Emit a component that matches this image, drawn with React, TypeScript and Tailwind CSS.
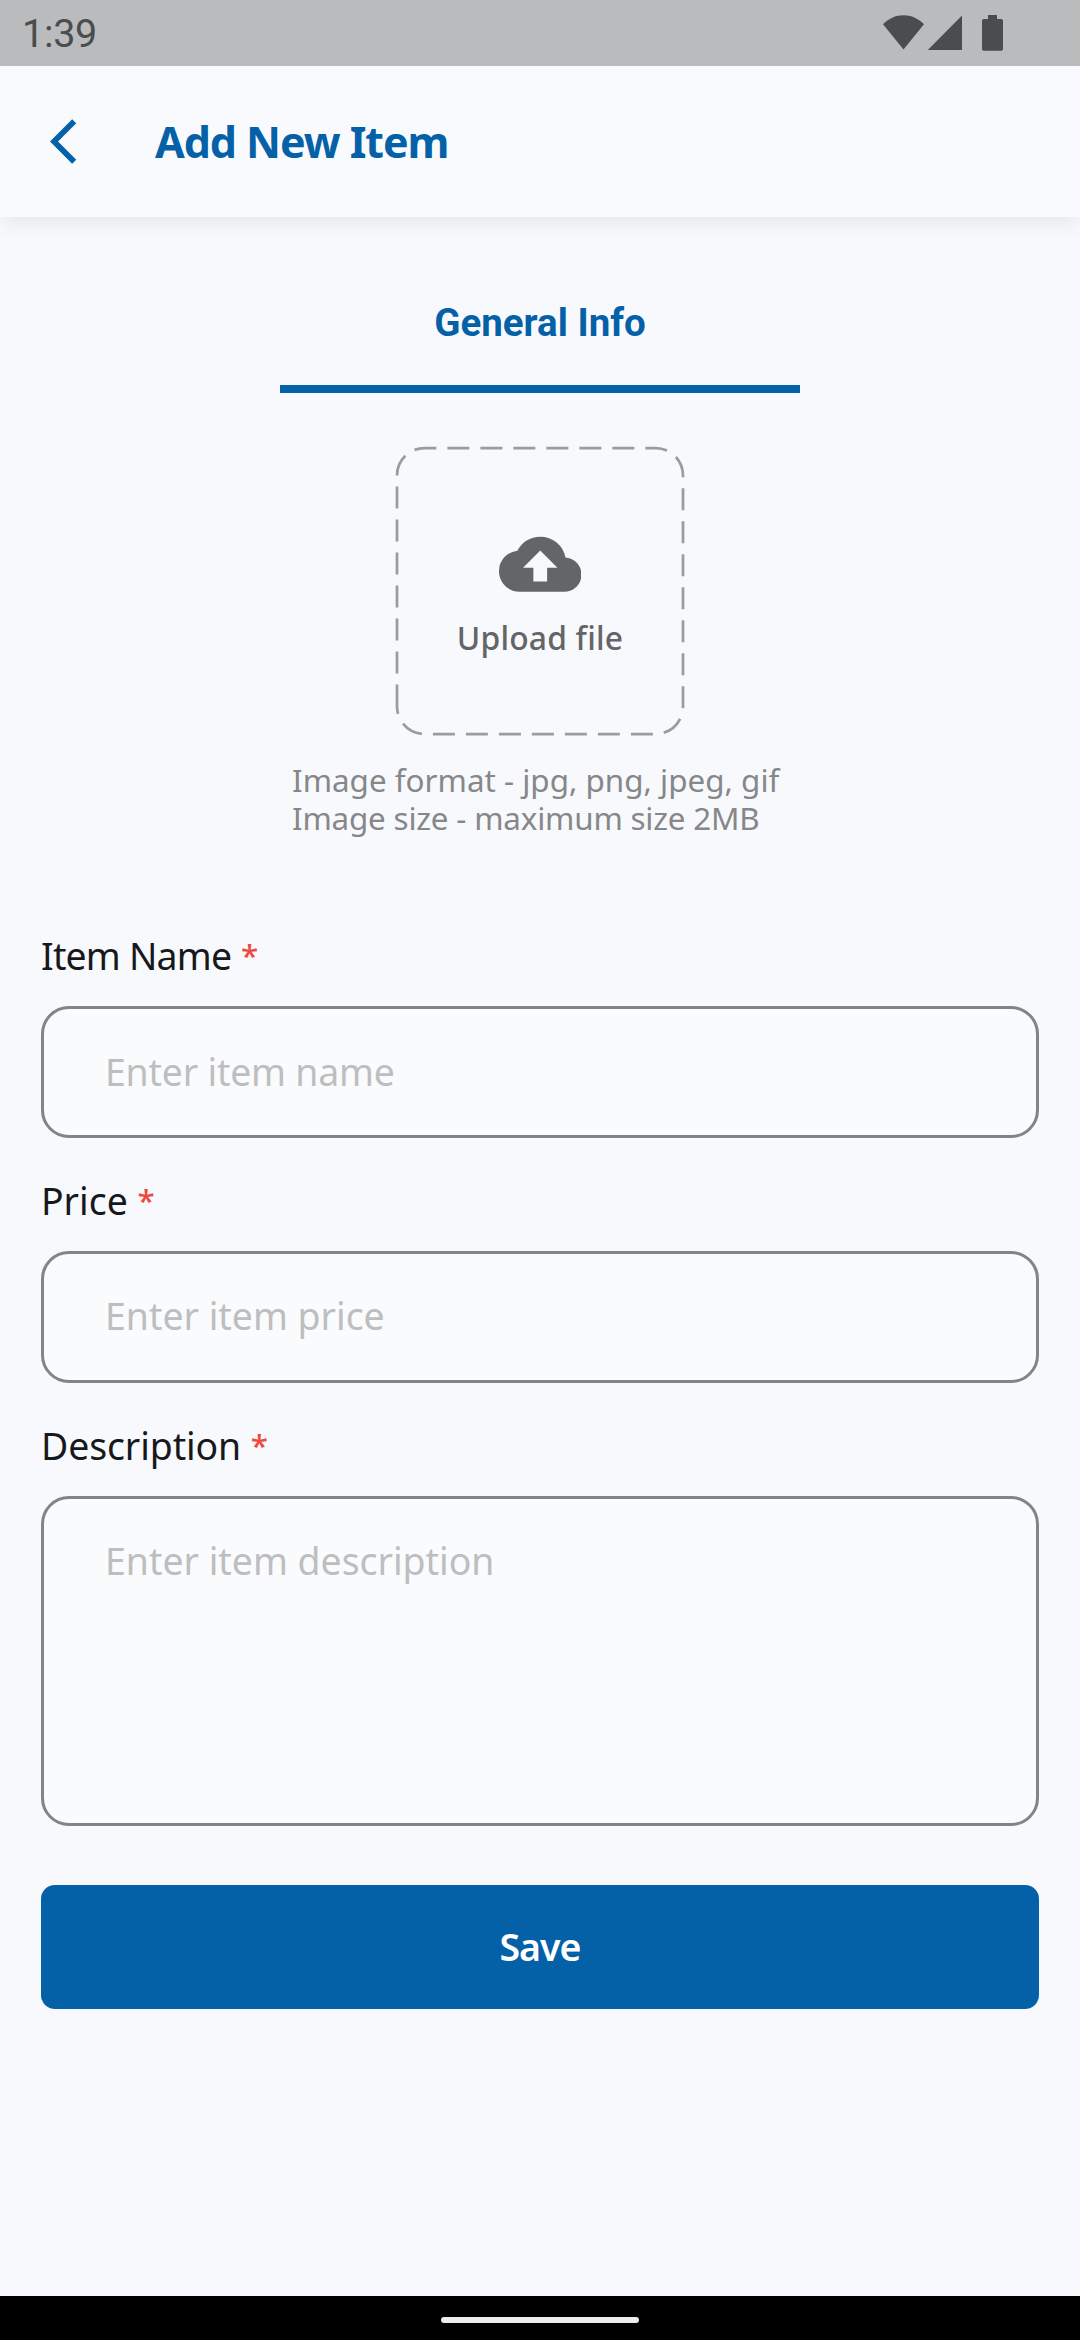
import type { ReactNode } from 'react';
import { MdCloudUpload } from 'react-icons/md';

function StatusBar() {
  return (
    <div className="flex h-[66px] shrink-0 items-center justify-between bg-[#babbbd] pl-[22px] text-[#4b4c4e]">
      <span className="mt-[2px] font-['Roboto',sans-serif] text-[39.5px] leading-[46px] tracking-[-0.3px]">1:39</span>
      <svg className="mr-[76px] h-[38px] w-[122px]" viewBox="882 14 122 38" fill="currentColor">
        <path d="M883 24.3C888.5 18.5 895.5 15.2 903.5 15.2S918.5 18.5 924 24.3L903.5 49.5z" />
        <path d="M962 15.5V50H927.8z" />
        <path d="M988 15h9v4h4.3q1.7 0 1.7 1.7v28.2q0 1.8-1.7 1.8h-17.6q-1.7 0-1.7-1.8V20.7q0-1.7 1.7-1.7h4.3z" />
      </svg>
    </div>
  );
}

function Header() {
  return (
    <header className="flex h-[151px] shrink-0 items-center bg-[#f8fafd] pl-[50px] text-[#0561a7] shadow-[0_11px_16px_-2px_rgba(0,0,0,0.06)]">
      <button type="button" aria-label="Back">
        <svg className="h-[46px] w-[27px]" viewBox="0 0 27 46" fill="none" stroke="currentColor" strokeWidth="5.8">
          <path d="M24.2 2.3L4 22.5l20.2 20.2" />
        </svg>
      </button>
      <h1 className="ml-[78px] text-[43px] leading-[56px] font-bold tracking-[-1.05px]">Add New Item</h1>
    </header>
  );
}

function UploadBox() {
  return (
    <button
      type="button"
      className="relative mt-[54px] flex size-[288px] flex-col items-center pt-[76px] text-[#646567]"
    >
      <svg className="absolute inset-0 size-[288px] overflow-visible" viewBox="0 0 288 288" fill="none">
        <path
          d="M1 259.5V28.5A27.5 27.5 0 0 1 28.5 1H259.5A27.5 27.5 0 0 1 287 28.5V259.5A27.5 27.5 0 0 1 259.5 287H28.5A27.5 27.5 0 0 1 1 259.5"
          stroke="#9b9c9f"
          strokeWidth="2.75"
          strokeDasharray="22 11"
        />
      </svg>
      <MdCloudUpload className="size-[82.5px]" />
      <span className="mt-[12px] text-[31.8px] leading-[40px] font-medium tracking-[0.2px] whitespace-nowrap">
        Upload file
      </span>
    </button>
  );
}

function Field({ label, labelClass, children }: { label: string; labelClass: string; children: ReactNode }) {
  return (
    <label className="flex flex-col gap-[27px]">
      <span className="h-[46px] text-[37.4px] leading-[46px] text-[#16181c]">
        <span className={labelClass}>{label}</span>{' '}
        <span className="align-[3px] text-[31.5px] leading-none font-medium text-[#f0483e]">*</span>
      </span>
      {children}
    </label>
  );
}

const inputClass =
  'block w-full resize-none rounded-[28px] border-[3px] border-[#838486] bg-[#f9fbfd] px-[61px] text-[37.4px] leading-[46px] text-[#16181c] placeholder:text-[#bdbebf] placeholder:opacity-100 outline-none';

export default function App() {
  return (
    <div className="flex h-[2340px] w-[1080px] flex-col overflow-hidden bg-[#f8f9fd] font-['Noto_Sans',sans-serif]">
      <StatusBar />
      <Header />

      <main className="flex flex-1 flex-col items-center">
        <div className="h-[176px] w-[520px] border-b-8 border-[#0561a7] pt-[84px] text-center font-['Roboto',sans-serif] text-[38.5px] leading-[44px] font-bold text-[#0561a7]">
          General Info
        </div>

        <UploadBox />

        <div className="mt-[25.5px] flex flex-col self-start pl-[292px] text-[31.4px] leading-[38px] whitespace-nowrap text-[#868789]">
          <span>Image format - jpg, png, jpeg, gif</span>
          <span className="tracking-[-0.2px]">Image size - maximum size 2MB</span>
        </div>

        <form className="mt-[96.5px] flex w-full flex-col gap-[39.6px] px-[41px]">
          <Field label="Item Name" labelClass="tracking-[-0.8px]">
            <input
              type="text"
              placeholder="Enter item name"
              className={`${inputClass} h-[132.3px] pb-[2px] tracking-[-0.2px]`}
            />
          </Field>
          <Field label="Price" labelClass="tracking-normal">
            <input type="text" placeholder="Enter item price" className={`${inputClass} h-[132.3px] pb-[3px]`} />
          </Field>
          <Field label="Description" labelClass="tracking-[-0.1px]">
            <textarea placeholder="Enter item description" className={`${inputClass} h-[330px] pt-[39px]`} />
          </Field>
          <button
            type="submit"
            className="mt-[19.6px] h-[124px] rounded-[14px] bg-[#0561a7] text-[37.5px] leading-[46px] font-semibold tracking-[-1px] text-white"
          >
            Save
          </button>
        </form>
      </main>

      <div className="flex h-[44px] shrink-0 justify-center bg-black pt-[21px]">
        <div className="h-[6px] w-[198px] rounded-full bg-[#ececec]" />
      </div>
    </div>
  );
}
